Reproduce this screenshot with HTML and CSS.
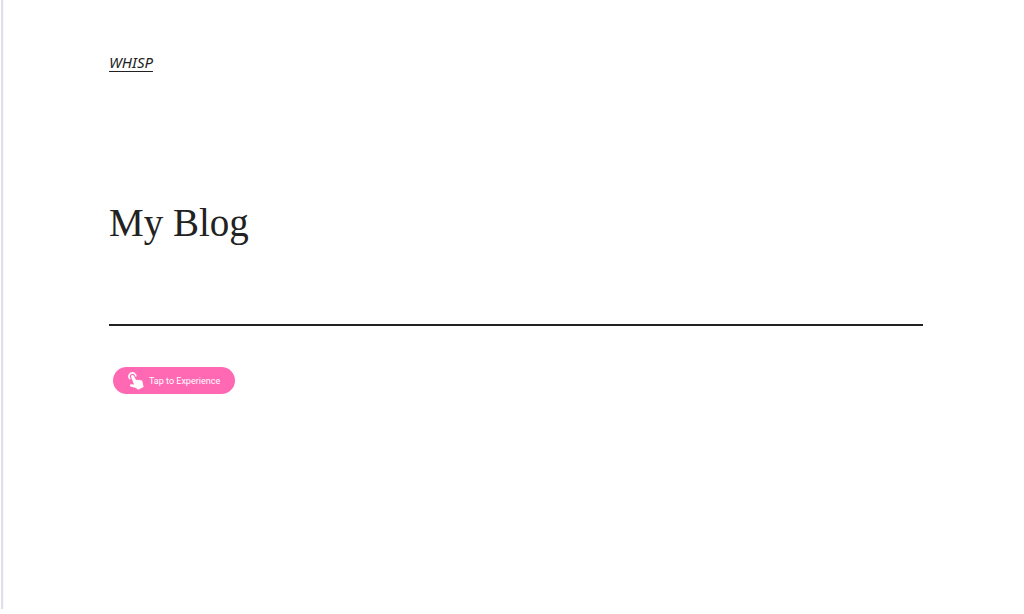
FILE: index.html
```
<!DOCTYPE html>
<html lang="en">
<head>
<meta charset="utf-8">
<title>My Blog</title>
<link rel="stylesheet" href="styles.css">
</head>
<body>
<div class="page">
  <header class="site-header"><a class="site-title" href="#">WHISP</a></header>
  <main>
    <h1 class="page-title">My Blog</h1>
    <hr class="divider">
    <button class="tap-button" type="button">
      <svg class="tap-icon" viewBox="0 0 16 18" aria-hidden="true">
        <path d="M2.3 7.2A3.5 3.5 0 1 1 7.9 4.4" fill="none" stroke="currentColor" stroke-width="1.6"/>
        <path d="M3 4.8C2.8 3 5 2.4 5.8 3.8L8.2 8.2C8.8 7.6 9.7 7.7 10.2 8.3C11 7.6 12 7.8 12.4 8.5C13.3 8.1 14.1 8.5 14.4 9.3L15.6 15L10.2 17.8L7.9 15.9L2.7 14.6C1.5 14.2 1.8 12.3 3 12.3L6.1 12.6Z" fill="currentColor"/>
      </svg>
      <span>Tap to Experience</span>
    </button>
  </main>
</div>
</body>
</html>
```
FILE: styles.css
```
* { box-sizing: border-box; }
body {
  margin: 0;
  padding: 0 0 5px 1px;
  background: #fff;
  color: #111;
}
.page {
  min-height: calc(100vh - 5px);
  padding: 52px 101px 40px 106px;
  border-left: 2px solid #dfe1ea;
  box-shadow: inset 1px 0 #f6f7fb;
}
.site-header { display: flex; }
.site-title {
  color: #222;
  font: italic 15px/20px "Noto Sans", sans-serif;
  text-decoration: underline;
  text-underline-offset: 3px;
}
.page-title {
  margin: 125px 0 75px;
  color: #222;
  font: 400 39px/52px "Liberation Serif", serif;
}
.divider {
  margin: 0 0 41px;
  border: 0;
  border-top: 2px solid #222;
}
.tap-button {
  display: flex;
  align-items: center;
  gap: 5px;
  height: 27px;
  margin-left: 4px;
  padding: 0 15px;
  border: 0;
  border-radius: 14px;
  background: #ff69b4;
  color: #fff;
  font: 9px/12px Roboto, sans-serif;
  white-space: nowrap;
}
.tap-icon {
  width: 16px;
  height: 18px;
}
```
